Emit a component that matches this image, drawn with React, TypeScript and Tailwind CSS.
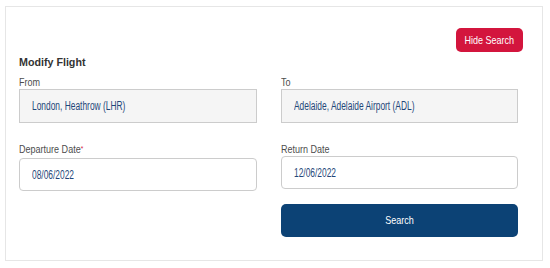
import type { ReactNode } from "react";

function Narrow({
  children,
  center,
  tight,
}: {
  children: ReactNode;
  center?: boolean;
  tight?: boolean;
}) {
  return (
    <span
      className={`inline-block whitespace-nowrap ${tight ? "scale-x-[0.7]" : "scale-x-[0.82]"} ${
        center ? "origin-center" : "origin-left"
      }`}
    >
      {children}
    </span>
  );
}

export default function App() {
  const label = "block text-[11px] leading-[14px] text-[#4d4d4d]";
  const field =
    "flex items-center border border-[#cccccc] px-[12px] text-[12px] text-[#1f4779]";
  return (
    <div className="h-[268px] w-[550px] bg-white font-['Liberation_Sans',Arial,sans-serif]">
      <div className="ml-[5px] mt-[6px] h-[255px] w-[538px] border border-[#e6e6e6] pl-[13px] pt-[21px]">
        <div className="flex w-[504px] justify-end">
          <button
            type="button"
            className="h-[24px] w-[67px] rounded-[5px] bg-[#d3153d] text-[11px] text-white"
          >
            <Narrow center>Hide Search</Narrow>
          </button>
        </div>
        <h2 className="mt-[2px] text-[10.7px] leading-[16px] font-bold text-[#333333]">
          Modify Flight
        </h2>
        <div className="mt-[5px] grid grid-cols-[238px_237px] gap-x-[24px]">
          <div>
            <label className={label}>
              <Narrow>From</Narrow>
            </label>
            <div className={`${field} h-[34px] bg-[#f5f5f5]`}>
              <Narrow tight>London, Heathrow (LHR)</Narrow>
            </div>
          </div>
          <div>
            <label className={label}>
              <Narrow>To</Narrow>
            </label>
            <div className={`${field} h-[34px] bg-[#f5f5f5]`}>
              <Narrow tight>Adelaide, Adelaide Airport (ADL)</Narrow>
            </div>
          </div>
          <div className="mt-[19px]">
            <label className={label}>
              <Narrow>
                Departure Date<span className="relative -top-[2px] text-[8px] text-[#d3153d]">*</span>
              </Narrow>
            </label>
            <div className={`${field} h-[33px] rounded-[4px] bg-white`}>
              <Narrow tight>08/06/2022</Narrow>
            </div>
          </div>
          <div className="mt-[19px]">
            <label className={label}>
              <Narrow>Return Date</Narrow>
            </label>
            <div className={`${field} h-[33px] rounded-[4px] bg-white`}>
              <Narrow tight>12/06/2022</Narrow>
            </div>
            <button
              type="button"
              className="mt-[15px] h-[33px] w-full rounded-[5px] bg-[#0c4275] text-[11px] text-white"
            >
              <Narrow center>Search</Narrow>
            </button>
          </div>
        </div>
      </div>
    </div>
  );
}
